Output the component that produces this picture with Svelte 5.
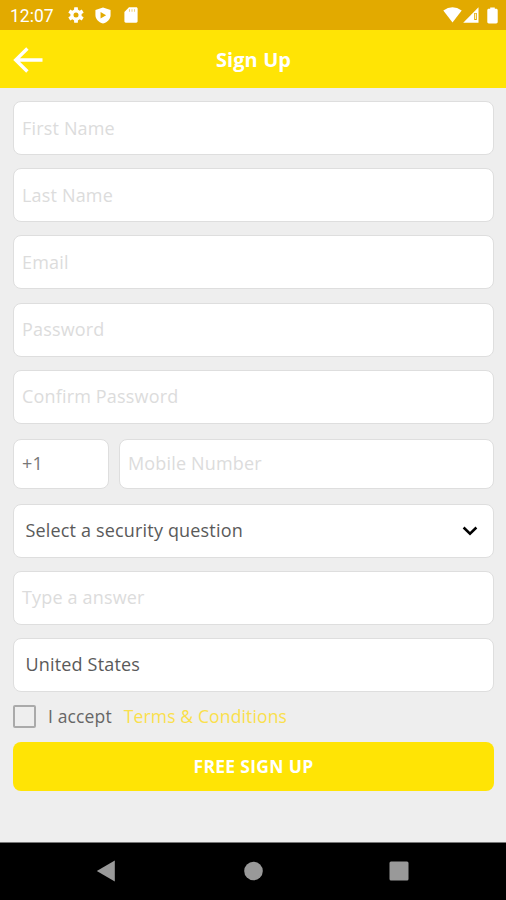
<script>
  const names = ['First Name', 'Last Name', 'Email', 'Password', 'Confirm Password'];
</script>

<div class="screen">
  <div class="status">
    <span class="time">12:07</span>
    <svg class="gear" width="16" height="16" viewBox="0 0 16 16">
      <g fill="#fff">
        <circle cx="8" cy="8" r="5.7" />
        {#each [0, 60, 120, 180, 240, 300] as a}
          <rect x="6.1" y="0.2" width="3.8" height="4" rx="0.5" transform="rotate({a} 8 8)" />
        {/each}
      </g>
      <circle cx="8" cy="8" r="2.5" fill="#e2aa00" />
    </svg>
    <svg class="shield" width="16" height="17" viewBox="0 0 15 17" preserveAspectRatio="none">
      <path d="M7.5.4 14.6 3v5c0 4-2.7 7-7.1 8.6C3.1 15 .4 12 .4 8V3z" fill="#fff" />
      <path d="M5.2 5v6.4l5.2-3.2z" fill="#e2aa00" />
    </svg>
    <svg class="card" width="14" height="16" viewBox="0 0 14 16">
      <path d="M5 .3h7.2c.8 0 1.4.6 1.4 1.4v12.6c0 .8-.6 1.4-1.4 1.4H1.8c-.8 0-1.4-.6-1.4-1.4V5z" fill="#fff" />
      <path d="M5.5 2.2v2.5M8 2.2v2.5M10.5 2.2v2.5" stroke="#f0d27c" stroke-width="1.1" />
    </svg>
    <div class="signals">
      <svg width="19" height="16" viewBox="0 0 19 16"><path d="M.3 3.5Q9.5-3 18.7 3.5L9.5 15.5z" fill="#fff" /></svg>
      <svg width="16" height="16" viewBox="0 0 16 16">
        <path d="M15.5.3v15.4H.2z" fill="#fff" />
        <path d="M11.2 6h2.6v7h-2.6z" fill="#e2aa00" />
        <path d="M12.5 6.6v5.4" stroke="#fff" stroke-width=".8" />
      </svg>
      <svg class="battery" width="11" height="17" viewBox="0 0 11 17"><path d="M3.2.4h4.6v1.4h1.4c.8 0 1.5.6 1.5 1.4v11.9c0 .8-.7 1.4-1.5 1.4H1.8c-.8 0-1.5-.6-1.5-1.4V3.2c0-.8.7-1.4 1.5-1.4h1.4z" fill="#fff" /></svg>
    </div>
  </div>

  <header>
    <svg width="30" height="28" viewBox="0 0 30 28">
      <path d="M14.4 2.5 2.7 14l11.7 11.5M3 14h26.5" fill="none" stroke="#fff" stroke-width="3.4" />
    </svg>
    <h1>Sign Up</h1>
  </header>

  <main>
    {#each names as name}
      <div class="field hint"><span>{name}</span></div>
    {/each}
    <div class="phone">
      <div class="field code"><span>+1</span></div>
      <div class="field hint number"><span>Mobile Number</span></div>
    </div>
    <div class="field value select">
      <span>Select a security question</span>
      <svg width="16" height="10" viewBox="0 0 16 10"><path d="M1.6 1.5 8 7.7l6.4-6.2" fill="none" stroke="#000" stroke-width="2.5" /></svg>
    </div>
    <div class="field hint"><span>Type a answer</span></div>
    <div class="field value"><span>United States</span></div>
    <div class="accept">
      <i class="box"></i>
      <span class="agree">I accept</span>
      <span class="terms">Terms &amp; Conditions</span>
    </div>
    <div class="submit">FREE SIGN UP</div>
  </main>

  <nav>
    <svg width="20" height="22" viewBox="0 0 20 22"><path d="M.8 11 18.8.4v21.2z" fill="#999" /></svg>
    <svg width="20" height="20" viewBox="0 0 20 20"><circle cx="10.5" cy="10" r="9.3" fill="#999" /></svg>
    <svg width="20" height="20" viewBox="0 0 20 20"><rect x=".5" y=".5" width="19" height="19" rx="1.5" fill="#999" /></svg>
  </nav>
</div>

<style>
  :global(body) { margin: 0; }
  .screen {
    width: 506px;
    height: 900px;
    display: flex;
    flex-direction: column;
    overflow: hidden;
    background: #eee;
    font-family: "Open Sans", "Noto Sans", sans-serif;
    font-size: 18px;
    font-weight: 400;
    letter-spacing: 0.17px;
    white-space: nowrap;
  }
  .status {
    height: 30px;
    box-sizing: border-box;
    padding: 0 8px 0 10px;
    background: #e2aa00;
    display: flex;
    align-items: center;
    color: #fff;
    letter-spacing: 0;
  }
  .time { font: 400 17.5px/30px Roboto, sans-serif; width: 58px; padding-top: 2px; }
  .shield { margin-left: 11px; }
  .card { margin-left: 13px; }
  .signals { margin-left: auto; display: flex; align-items: center; }
  .signals svg + svg { margin-left: 1px; }
  .signals svg.battery { margin-left: 8px; }
  header {
    height: 58px;
    background: #ffe405;
    display: flex;
    align-items: center;
    padding: 2px 13px 0;
    box-sizing: border-box;
    margin-bottom: 13px;
    color: #fff;
  }
  h1 { flex: 1; margin: 0 29px 0 0; text-align: center; font-size: 20px; line-height: 26px; font-weight: 700; letter-spacing: 0.1px; }
  main { flex: 1; padding: 0 12px 0 13px; }
  .field {
    box-sizing: border-box;
    height: 54px;
    margin-bottom: 13.2px;
    border: 1px solid #dedede;
    border-radius: 8px;
    background: #fff;
    padding: 0 8px;
    display: flex;
    align-items: center;
  }
  .field span { margin-bottom: 1px; }
  .hint { color: #dcdcdc; }
  .phone { display: flex; gap: 10px; margin: 15px 0; }
  .phone .field { height: 50px; margin: 0; }
  .phone .field span { margin-bottom: 2px; }
  .phone .code { width: 96px; color: #777; }
  .number { flex: 1; }
  .value { padding-left: 11.5px; color: #5a5a5a; margin-bottom: 13px; }
  .select { justify-content: space-between; padding-right: 15px; }
  .accept { display: flex; align-items: center; height: 24px; color: #666; font-size: 17.5px; letter-spacing: 0.14px; }
  .accept span { margin-bottom: 1px; }
  .box { box-sizing: border-box; width: 23px; height: 23px; border: 2px solid #aaa; border-radius: 2px; margin-right: 12px; }
  .accept .terms { color: #fae04c; margin-left: 12px; }
  .submit {
    height: 49px;
    box-sizing: border-box;
    padding-bottom: 1px;
    margin-top: 13px;
    border-radius: 8px;
    background: #ffe405;
    color: #fff;
    font-size: 17.5px;
    font-weight: 700;
    letter-spacing: 0.3px;
    display: flex;
    align-items: center;
    justify-content: center;
  }
  nav {
    height: 58px;
    background: #000;
    border-top: 1px solid #777;
    box-sizing: border-box;
    padding: 0 97px 1px 96px;
    display: flex;
    align-items: center;
    justify-content: space-between;
  }
</style>
